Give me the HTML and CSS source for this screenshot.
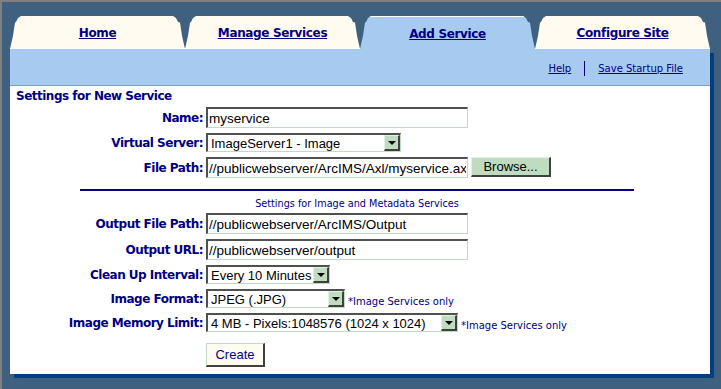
FILE: index.html
```html
<!DOCTYPE html>
<html lang="en">
<head>
<meta charset="UTF-8">
<title>Add Service</title>
<link rel="stylesheet" href="styles.css">
</head>
<body>
<div class="page">
  <nav class="tabs">
    <a class="tab" href="#">Home</a>
    <a class="tab" href="#">Manage Services</a>
    <a class="tab active" href="#">Add Service</a>
    <a class="tab" href="#">Configure Site</a>
  </nav>
  <div class="panel">
    <div class="toolbar">
      <a href="#">Help</a>
      <span class="sep"></span>
      <a href="#">Save Startup File</a>
    </div>
    <form class="content">
      <h2>Settings for New Service</h2>
      <div class="grid">
        <label>Name:</label>
        <div class="ctrl"><input class="field" type="text" value="myservice"></div>

        <label>Virtual Server:</label>
        <div class="ctrl"><div class="select w-server"><span>ImageServer1 - Image</span><span class="arrow"></span></div></div>

        <label>File Path:</label>
        <div class="ctrl"><input class="field" type="text" value="//publicwebserver/ArcIMS/Axl/myservice.axl"><button type="button" class="browse">Browse...</button></div>
      </div>

      <hr class="rule">
      <p class="subhead">Settings for Image and Metadata Services</p>

      <div class="grid grid-2">
        <label>Output File Path:</label>
        <div class="ctrl"><input class="field" type="text" value="//publicwebserver/ArcIMS/Output"></div>

        <label>Output URL:</label>
        <div class="ctrl"><input class="field" type="text" value="//publicwebserver/output"></div>

        <label>Clean Up Interval:</label>
        <div class="ctrl"><div class="select w-interval"><span>Every 10 Minutes</span><span class="arrow"></span></div></div>

        <label>Image Format:</label>
        <div class="ctrl"><div class="select w-format"><span>JPEG (.JPG)</span><span class="arrow"></span></div><span class="note">*Image Services only</span></div>

        <label>Image Memory Limit:</label>
        <div class="ctrl"><div class="select w-memory"><span>4 MB - Pixels:1048576 (1024 x 1024)</span><span class="arrow"></span></div><span class="note">*Image Services only</span></div>

        <span></span>
        <div class="ctrl"><button type="button" class="create">Create</button></div>
      </div>
    </form>
  </div>
</div>
</body>
</html>
```

FILE: styles.css
```css
*{box-sizing:border-box; margin:0; padding:0;}
body{
  background:#406080; border-top:2px solid #808080; border-left:2px solid #808080;
  height:389px; overflow:hidden;
  font-family:"DejaVu Sans",Verdana,sans-serif; color:#000080;
}
a{color:#000080;}

.page{width:700px; margin:14px 0 0 8px;}

/* tabs */
.tabs{display:flex; height:33px;}
.tab{
  flex:0 0 175px; display:flex; align-items:center; justify-content:center; padding-top:2px;
  background:#fffbf0; border-bottom:1px solid #fff;
  font-size:12px; font-weight:bold; letter-spacing:-0.35px;
  clip-path:polygon(0 100%, 3px 60%, 5px 20%, 6px 6px, 8px 2px, 11px 0, calc(100% - 12px) 0, calc(100% - 9px) 2px, calc(100% - 7px) 6px, calc(100% - 5px) 20%, calc(100% - 3px) 60%, 100% 100%);
}
.tab.active{background:#a6caf0; border-bottom:0; box-shadow:inset 0 1px 0 #fff;}

/* panel */
.panel{background:#fff; box-shadow:4px 4px 0 #003f7f;}
.toolbar{
  height:37px; background:#a6caf0; border-bottom:1px solid #7f9fc4;
  display:flex; align-items:center; justify-content:flex-end; gap:13px;
  padding:3px 27px 0 0; font-size:10px;
}
.sep{width:1px; height:15px; background:#000080;}

.content{height:288px; padding:3px 6px 0;}
h2{font-size:12px; line-height:14px; font-weight:bold; letter-spacing:-0.5px;}

.grid{display:grid; grid-template-columns:187px auto; column-gap:3px; row-gap:5px; margin-top:4px;}
.grid-2{margin-top:3px;}
.grid label{font-size:12px; font-weight:bold; letter-spacing:-0.5px; text-align:right; align-self:center;}
.ctrl{display:flex; align-items:flex-end; gap:3px;}

.field{
  width:262px; height:21px; padding:0 1px;
  border-style:solid; border-width:2px 1px 1px 2px; border-color:#505050 #c0dcc0 #c0dcc0 #505050;
  font:13.5px "Liberation Sans",Arial,sans-serif; color:#000; background:#fff; outline:none;
}

.select{
  display:flex; align-items:center; height:19px; padding-left:3px;
  border-style:solid; border-width:2px 1px 1px 2px; border-color:#505050 #c0dcc0 #c0dcc0 #505050;
  font:13px "Liberation Sans",Arial,sans-serif; color:#000; background:#fff;
}
.select span:first-child{flex:1; white-space:nowrap; overflow:hidden;}
.arrow{
  width:16px; height:16px; background:#c0dcc0; display:flex; align-items:center; justify-content:center;
  border-style:solid; border-width:1px 2px 2px 1px; border-color:#e4f0e4 #404040 #404040 #e4f0e4;
}
.arrow::after{content:""; border-left:4px solid transparent; border-right:4px solid transparent; border-top:4px solid #000;}
.w-server{width:195px;}
.w-interval{width:124px;}
.w-format{width:139px;}
.w-memory{width:252px;}

.note{font-size:10px; line-height:12px;}

.browse{
  width:80px; height:20px; margin-bottom:1px; background:#c0dcc0; color:#000;
  border-style:solid; border-width:1px 2px 2px 1px; border-color:#e4f0e4 #404040 #404040 #e4f0e4;
  font:13px "Liberation Sans",Arial,sans-serif;
}
.create{
  width:59px; height:24px; margin-top:6px; background:#fffbf0; color:#000080;
  border-style:solid; border-width:1px 2px 2px 1px; border-color:#c0dcc0 #404040 #404040 #c0dcc0;
  font:13px "Liberation Sans",Arial,sans-serif;
}

.rule{border:0; height:2px; background:#000080; width:554px; margin:11px 0 0 64px;}
.subhead{width:554px; margin:7px 0 0 64px; text-align:center; font-size:9.7px; line-height:12px;}
```
